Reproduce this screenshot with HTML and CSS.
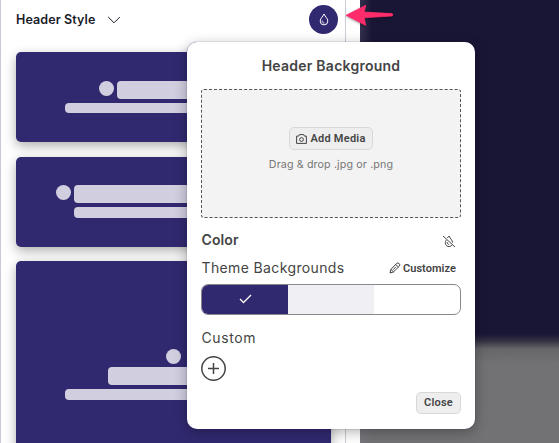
FILE: index.html
```
<!DOCTYPE html>
<html lang="en">
<head>
<meta charset="utf-8">
<title>Header Style</title>
<link rel="stylesheet" href="styles.css">
</head>
<body>
<div class="app">
  <aside class="panel">
    <div class="panel-content">
      <header class="panel-header">
        <span class="panel-title">Header Style</span>
        <svg class="chevron" width="14" height="8" viewBox="0 0 14 8"><path d="M1.2 1L7 6.8 12.8 1"/></svg>
        <button class="color-toggle" aria-label="Background">
          <svg width="10" height="13" viewBox="0 0 10 13"><path d="M5 1C4 3.7 1.2 5.2 1.2 8.1a3.8 3.8 0 0 0 7.6 0C8.8 5.2 6 3.7 5 1zM3.2 7.7c0 1.5.7 2.2 2.1 2.4"/></svg>
        </button>
      </header>
      <div class="cards">
        <div class="card centered">
          <div class="row"><i class="dot"></i><i class="bar wide"></i></div>
          <i class="line"></i>
        </div>
        <div class="card split">
          <i class="dot"></i>
          <div class="stack"><i class="bar"></i><i class="line"></i></div>
        </div>
        <div class="card tall">
          <i class="dot"></i><i class="bar"></i><i class="line"></i>
        </div>
      </div>
    </div>
  </aside>
  <main class="preview"></main>
  <svg class="pointer" width="50" height="24" viewBox="0 0 50 24"><path d="M1 12.3L20.8 2.2l-1.6 6.9L47 10.6q2 1.2 0 2.4L19.2 14.8l1.6 7.7z"/></svg>
  <section class="popover">
    <h2>Header Background</h2>
    <div class="dropzone">
      <button class="button media">
        <svg width="11" height="10" viewBox="0 0 11 10"><path d="M.6 2.1h2L3.3.6h4.4l.7 1.5h2v7.3H.6z"/><circle cx="5.5" cy="5.5" r="1.9"/></svg>
        <span>Add Media</span>
      </button>
      <p>Drag &amp; drop .jpg or .png</p>
    </div>
    <div class="heading-row">
      <h3>Color</h3>
      <svg class="no-color" width="14" height="13" viewBox="0 0 14 13"><path d="M1 1l12 11M5.2 3.1L7.2 1c.4 2 3.4 4.3 3.4 6.7M4.4 5C3.5 6.2 3.2 7 3.3 8.1c.3 3.7 4.8 4.6 6.6 2M5.2 7c-.2 1.4.6 2.2 2 2.6"/></svg>
    </div>
    <div class="theme-row">
      <span class="label theme-label">Theme Backgrounds</span>
      <button class="customize">
        <svg width="12" height="12" viewBox="0 0 12 12"><path d="M1 11l.8-3.5 5.7-6q1.3-1.2 2.7.1 1.3 1.3.1 2.6l-5.8 5.7zM2 7.5L4.6 10M6.6 2.4l2.8 2.7M4.2 7.7l2.7-2.9"/></svg>
        <span>Customize</span>
      </button>
    </div>
    <div class="swatches">
      <div class="swatch primary"><svg width="13" height="10" viewBox="0 0 13 10"><path d="M1 5l3.5 3.5L12 1"/></svg></div>
      <div class="swatch soft"></div>
      <div class="swatch plain"></div>
    </div>
    <span class="label custom-label">Custom</span>
    <button class="add" aria-label="Add color"><svg width="25" height="25" viewBox="0 0 25 25"><circle cx="12.5" cy="12.5" r="11.7"/><path d="M7 12.5h11M12.5 7v11"/></svg></button>
    <footer><button class="button close"><span>Close</span></button></footer>
  </section>
</div>
</body>
</html>
```
FILE: styles.css
```
* { box-sizing: border-box; }
body { margin: 0; font-family: Inter, "Liberation Sans", sans-serif; color: #444; }
button { margin: 0; padding: 0; border: 0; background: none; font: inherit; color: inherit; }
svg { display: block; flex: none; fill: none; stroke: currentColor; }
h2, h3, p { margin: 0; }
.app { position: relative; display: flex; width: 559px; height: 443px; overflow: hidden; background: #fff; }
.panel { width: 360px; flex: none; border-left: 1px solid #cbcad4; }
.panel-content { width: 345px; height: 443px; padding: 0 14px 0 15px; border-right: 1px solid #ccccd4; overflow: hidden; }
.panel-header { display: flex; align-items: center; height: 39px; margin-bottom: 13px; color: #191b29; }
.panel-title { width: 80px; font-size: 12.5px; font-weight: 600; letter-spacing: .1px; white-space: nowrap; }
.chevron { margin-left: 11px; }
.color-toggle { display: flex; align-items: center; justify-content: center; width: 29px; height: 29px; margin-left: auto; margin-right: -7px; border-radius: 50%; background: #312970; color: #fff; }
.color-toggle svg { margin-bottom: 1px; }
.cards { display: flex; flex-direction: column; gap: 15px; }
.card { width: 315px; height: 90px; flex: none; border-radius: 5px; background: #312970; box-shadow: 0 4px 12px rgba(0,0,0,.32); }
.dot, .bar, .line { display: block; background: #d1cfdf; }
.dot { width: 15px; height: 15px; flex: none; border-radius: 50%; }
.bar { height: 18px; border-radius: 4px; }
.line { height: 11px; border-radius: 4px; }
.centered { padding-top: 29px; }
.row { display: flex; justify-content: center; gap: 3px; margin-bottom: 4px; }
.wide { width: 131px; }
.centered .line, .tall .line { width: 217px; margin: 0 auto; }
.centered .line { height: 10px; }
.split { display: flex; gap: 3px; padding: 28px 0 0 40px; }
.stack { display: flex; flex-direction: column; gap: 4px; width: 217px; }
.tall { display: flex; flex-direction: column; align-items: center; height: 225px; margin-top: -1px; padding-top: 88px; }
.tall .bar { width: 131px; margin: 3px 0 4px; }
.preview { flex: 1; background: linear-gradient(90deg, rgba(130,130,145,.25), transparent 12px), linear-gradient(#191535 0 334px, #343144 341px, #666668 349px, #727274 364px); }
.pointer { position: absolute; left: 345px; top: 3px; fill: #ff2c6c; stroke: #ff2c6c; stroke-width: .7; filter: drop-shadow(0 1px 1px rgba(0,0,0,.35)); }
.popover { position: absolute; left: 187px; top: 42px; display: flex; flex-direction: column; width: 288px; height: 387px; padding: 15px 14px 15px; border-radius: 10px; background: #fff; box-shadow: 0 0 1px #312970, 0 3px 13px rgba(0,0,0,.3); }
h2 { height: 18px; font-size: 14px; line-height: 18px; font-weight: 600; letter-spacing: .25px; text-align: center; white-space: nowrap; }
.dropzone { display: flex; flex-direction: column; align-items: center; width: 260px; height: 129px; margin-top: 14px; padding-top: 37px; border: 1px dashed #555; border-radius: 3px; background: #f3f3f3; }
.button { display: flex; align-items: center; justify-content: center; border: 1px solid #d8d8d8; border-radius: 5px; background: #eee; font-family: Roboto, sans-serif; font-size: 11px; font-weight: 600; letter-spacing: .25px; }
.button span { padding-bottom: 1px; }
.media { width: 84px; height: 23px; gap: 3px; white-space: nowrap; }
.dropzone p { margin-top: 7px; font-size: 10.7px; line-height: 15px; letter-spacing: .13px; color: #777; white-space: nowrap; }
.heading-row, .theme-row { display: flex; align-items: center; justify-content: space-between; }
.heading-row { height: 20px; margin-top: 12px; padding-right: 5px; }
h3 { padding-left: .5px; font-size: 14px; line-height: 20px; font-weight: 600; letter-spacing: .1px; }
.no-color { margin-top: 3px; }
.theme-row { height: 22px; margin-top: 7px; padding-right: 5px; }
.label { padding-left: .5px; font-size: 14px; line-height: 20px; white-space: nowrap; letter-spacing: .37px; }
.customize { display: flex; align-items: center; gap: 2px; font-family: Roboto, sans-serif; font-size: 11px; font-weight: 600; letter-spacing: .05px; }
.swatches { display: flex; height: 31px; margin-top: 5px; border: 1px solid #888; border-radius: 7px; overflow: hidden; }
.swatch { flex: 1; display: flex; align-items: center; justify-content: center; }
.swatch svg { margin-bottom: 1px; stroke-width: 1.3; }
.primary { background: #312970; color: #fff; }
.soft { background: #f0eff4; }
.custom-label { height: 20px; margin-top: 13px; letter-spacing: .6px; }
.add { width: 25px; height: 25px; margin: 8px 0 0; }
.add svg { stroke-width: 1.5; }
footer { display: flex; justify-content: flex-end; margin-top: auto; }
.close { width: 45px; height: 22px; }
```
